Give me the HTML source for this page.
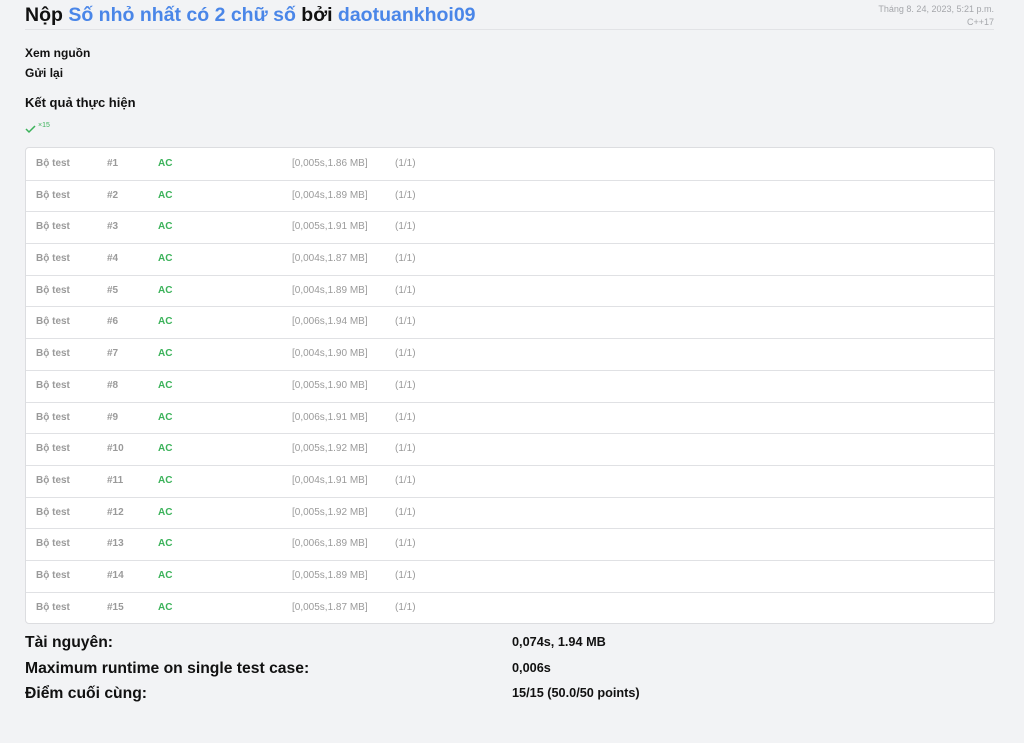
<!DOCTYPE html>
<html><head><meta charset="utf-8"><style>
body{margin:0;background:#f2f3f5;font-family:"Liberation Sans","Noto Sans CJK SC",sans-serif;color:#111;width:1024px;height:743px;overflow:hidden;position:relative}
.h{position:absolute;left:25px;top:4px;font-size:19.5px;font-weight:bold;white-space:nowrap}
.h a{color:#4a86e8}
.line{position:absolute;left:25px;top:29px;width:969px;height:1px;background:#e2e3e6}
.meta{position:absolute;right:30px;top:3px;text-align:right;font-size:9px;color:#a5a7ab;line-height:13px}
.lk{position:absolute;left:25px;font-size:12px;font-weight:bold}
.tb{position:absolute;left:25px;top:147px;width:968px;height:475px;background:#fff;border:1px solid #dcdde0;border-radius:4px;overflow:hidden}
.r{height:31.7px;border-top:1px solid #e0e1e4;box-sizing:border-box;position:relative;font-size:10px;font-weight:bold;color:#9a9a9a}
.r:first-child{border-top:1px solid transparent}
.r span{position:absolute;top:9px}
.ac{color:#3bb25a}
.n{font-weight:normal}
.s{position:absolute;font-size:15.7px;font-weight:bold}
.v{position:absolute;left:512px;font-size:12.7px;font-weight:bold}
</style></head><body>
<div class="h">Nộp <a>Số nhỏ nhất có 2 chữ số</a> bởi <a>daotuankhoi09</a></div>
<div class="line"></div>
<div class="meta">Tháng 8. 24, 2023, 5:21 p.m.<br>C++17</div>
<div class="lk" style="top:46px">Xem nguồn</div>
<div class="lk" style="top:66px">Gửi lại</div>
<div class="lk" style="top:95px;font-size:13px">Kết quả thực hiện</div>
<svg style="position:absolute;left:25px;top:124px" width="12" height="10"><path d="M1 5 L4 8 L10 2" stroke="#3bb25a" stroke-width="1.5" fill="none"/></svg>
<div style="position:absolute;left:38px;top:122px;font-size:7px;color:#3bb25a">×15</div>
<div class="tb">
<div class="r"><span style="left:10px">Bộ test</span><span style="left:81px">#1</span><span class="ac" style="left:132px">AC</span><span class="n" style="left:266px">[0,005s,1.86 MB]</span><span class="n" style="left:369px">(1/1)</span></div>
<div class="r"><span style="left:10px">Bộ test</span><span style="left:81px">#2</span><span class="ac" style="left:132px">AC</span><span class="n" style="left:266px">[0,004s,1.89 MB]</span><span class="n" style="left:369px">(1/1)</span></div>
<div class="r"><span style="left:10px">Bộ test</span><span style="left:81px">#3</span><span class="ac" style="left:132px">AC</span><span class="n" style="left:266px">[0,005s,1.91 MB]</span><span class="n" style="left:369px">(1/1)</span></div>
<div class="r"><span style="left:10px">Bộ test</span><span style="left:81px">#4</span><span class="ac" style="left:132px">AC</span><span class="n" style="left:266px">[0,004s,1.87 MB]</span><span class="n" style="left:369px">(1/1)</span></div>
<div class="r"><span style="left:10px">Bộ test</span><span style="left:81px">#5</span><span class="ac" style="left:132px">AC</span><span class="n" style="left:266px">[0,004s,1.89 MB]</span><span class="n" style="left:369px">(1/1)</span></div>
<div class="r"><span style="left:10px">Bộ test</span><span style="left:81px">#6</span><span class="ac" style="left:132px">AC</span><span class="n" style="left:266px">[0,006s,1.94 MB]</span><span class="n" style="left:369px">(1/1)</span></div>
<div class="r"><span style="left:10px">Bộ test</span><span style="left:81px">#7</span><span class="ac" style="left:132px">AC</span><span class="n" style="left:266px">[0,004s,1.90 MB]</span><span class="n" style="left:369px">(1/1)</span></div>
<div class="r"><span style="left:10px">Bộ test</span><span style="left:81px">#8</span><span class="ac" style="left:132px">AC</span><span class="n" style="left:266px">[0,005s,1.90 MB]</span><span class="n" style="left:369px">(1/1)</span></div>
<div class="r"><span style="left:10px">Bộ test</span><span style="left:81px">#9</span><span class="ac" style="left:132px">AC</span><span class="n" style="left:266px">[0,006s,1.91 MB]</span><span class="n" style="left:369px">(1/1)</span></div>
<div class="r"><span style="left:10px">Bộ test</span><span style="left:81px">#10</span><span class="ac" style="left:132px">AC</span><span class="n" style="left:266px">[0,005s,1.92 MB]</span><span class="n" style="left:369px">(1/1)</span></div>
<div class="r"><span style="left:10px">Bộ test</span><span style="left:81px">#11</span><span class="ac" style="left:132px">AC</span><span class="n" style="left:266px">[0,004s,1.91 MB]</span><span class="n" style="left:369px">(1/1)</span></div>
<div class="r"><span style="left:10px">Bộ test</span><span style="left:81px">#12</span><span class="ac" style="left:132px">AC</span><span class="n" style="left:266px">[0,005s,1.92 MB]</span><span class="n" style="left:369px">(1/1)</span></div>
<div class="r"><span style="left:10px">Bộ test</span><span style="left:81px">#13</span><span class="ac" style="left:132px">AC</span><span class="n" style="left:266px">[0,006s,1.89 MB]</span><span class="n" style="left:369px">(1/1)</span></div>
<div class="r"><span style="left:10px">Bộ test</span><span style="left:81px">#14</span><span class="ac" style="left:132px">AC</span><span class="n" style="left:266px">[0,005s,1.89 MB]</span><span class="n" style="left:369px">(1/1)</span></div>
<div class="r"><span style="left:10px">Bộ test</span><span style="left:81px">#15</span><span class="ac" style="left:132px">AC</span><span class="n" style="left:266px">[0,005s,1.87 MB]</span><span class="n" style="left:369px">(1/1)</span></div>
</div>
<div class="s" style="left:25px;top:634px">Tài nguyên:</div>
<div class="s" style="left:25px;top:660px">Maximum runtime on single test case:</div>
<div class="s" style="left:25px;top:685px">Điểm cuối cùng:</div>
<div class="v" style="top:635px">0,074s, 1.94 MB</div>
<div class="v" style="top:661px">0,006s</div>
<div class="v" style="top:686px">15/15 (50.0/50 points)</div>
</body></html>
